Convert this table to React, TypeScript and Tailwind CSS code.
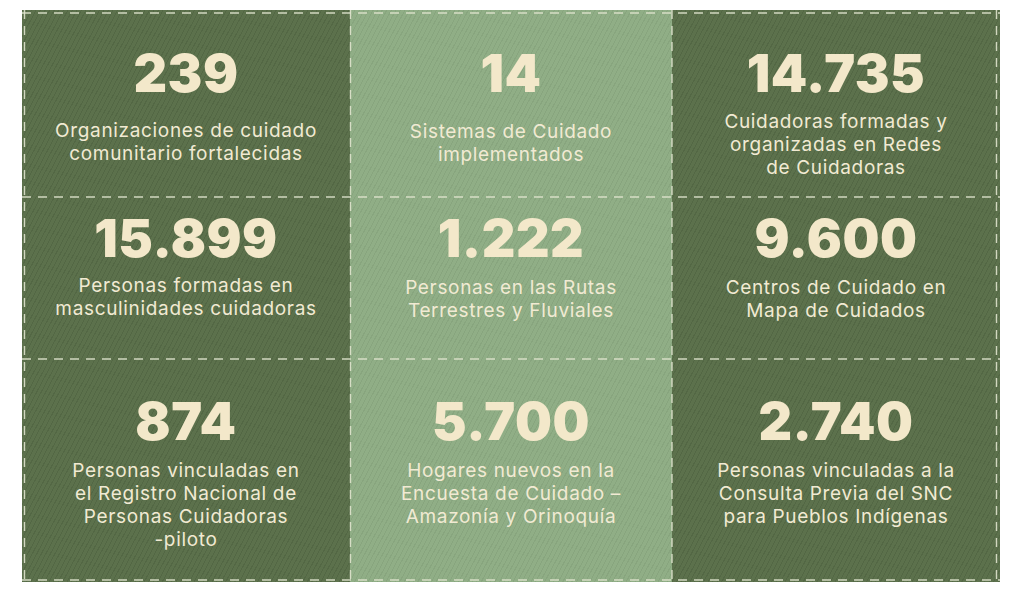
import React from "react";

type Cell = { n: string; lines: string[]; light?: boolean; gap: string };

const rows: { pt: string; cells: Cell[] }[] = [
  {
    pt: "pt-[38px]",
    cells: [
      { n: "239", lines: ["Organizaciones de cuidado", "comunitario fortalecidas"], gap: "mt-[19px]" },
      { n: "14", lines: ["Sistemas de Cuidado", "implementados"], light: true, gap: "mt-[20px]" },
      { n: "14.735", lines: ["Cuidadoras formadas y", "organizadas en Redes", "de Cuidadoras"], gap: "mt-[10px]" },
    ],
  },
  {
    pt: "pt-[16px]",
    cells: [
      { n: "15.899", lines: ["Personas formadas en", "masculinidades cuidadoras"], gap: "mt-[9px]" },
      { n: "1.222", lines: ["Personas en las Rutas", "Terrestres y Fluviales"], light: true, gap: "mt-[11px]" },
      { n: "9.600", lines: ["Centros de Cuidado en", "Mapa de Cuidados"], gap: "mt-[11px]" },
    ],
  },
  {
    pt: "pt-[37px]",
    cells: [
      {
        n: "874",
        lines: ["Personas vinculadas en", "el Registro Nacional de", "Personas Cuidadoras", "-piloto"],
        gap: "mt-[11px]",
      },
      {
        n: "5.700",
        lines: ["Hogares nuevos en la", "Encuesta de Cuidado –", "Amazonía y Orinoquía"],
        light: true,
        gap: "mt-[11px]",
      },
      {
        n: "2.740",
        lines: ["Personas vinculadas a la", "Consulta Previa del SNC", "para Pueblos Indígenas"],
        gap: "mt-[11px]",
      },
    ],
  },
];

function Dashes() {
  const dash = { stroke: "#dfe3cd", strokeWidth: 1.4, strokeDasharray: "9 7", strokeOpacity: 0.9 };
  return (
    <svg
      className="absolute inset-0 pointer-events-none"
      width="978"
      height="572"
      viewBox="0 0 978 572"
    >
      <line x1="0" y1="3" x2="978" y2="3" {...dash} />
      <line x1="0" y1="187" x2="978" y2="187" {...dash} />
      <line x1="0" y1="349" x2="978" y2="349" {...dash} />
      <line x1="0" y1="570" x2="978" y2="570" {...dash} />
      <line x1="2.5" y1="0" x2="2.5" y2="572" {...dash} />
      <line x1="328.5" y1="0" x2="328.5" y2="572" {...dash} />
      <line x1="650" y1="0" x2="650" y2="572" {...dash} />
      <line x1="974.5" y1="0" x2="974.5" y2="572" {...dash} />
    </svg>
  );
}

export default function App() {
  return (
    <div className="w-[1024px] h-[603px] bg-white pt-[10px] pl-[22px] overflow-hidden font-[Inter,'Noto_Sans',sans-serif]">
      <div className="relative w-[978px] h-[572px] grid grid-cols-[328px_322px_328px] grid-rows-[187px_162px_223px]">
        {rows.map((row, ri) =>
          row.cells.map((c, ci) => (
            <div
              key={`${ri}-${ci}`}
              className={`flex flex-col items-center text-center ${row.pt} ${
                c.light
                  ? "bg-[#90ae86] bg-[repeating-linear-gradient(118deg,rgba(40,60,35,0.08)_0px,rgba(40,60,35,0.08)_1px,transparent_1px,transparent_4px)]"
                  : "bg-[#5c714c] bg-[repeating-linear-gradient(118deg,rgba(20,35,15,0.12)_0px,rgba(20,35,15,0.12)_1px,transparent_1px,transparent_4px)]"
              }`}
            >
              <div className="text-[52px] leading-[52px] font-black text-[#f3e8ca] tracking-[0.01em]">
                {c.n}
              </div>
              <div className={`${c.gap} text-[19px] leading-[23px] text-[#f1ead3] tracking-[0.035em]`}>
                {c.lines.map((l, i) => (
                  <div key={i}>{l}</div>
                ))}
              </div>
            </div>
          ))
        )}
        <Dashes />
      </div>
    </div>
  );
}
